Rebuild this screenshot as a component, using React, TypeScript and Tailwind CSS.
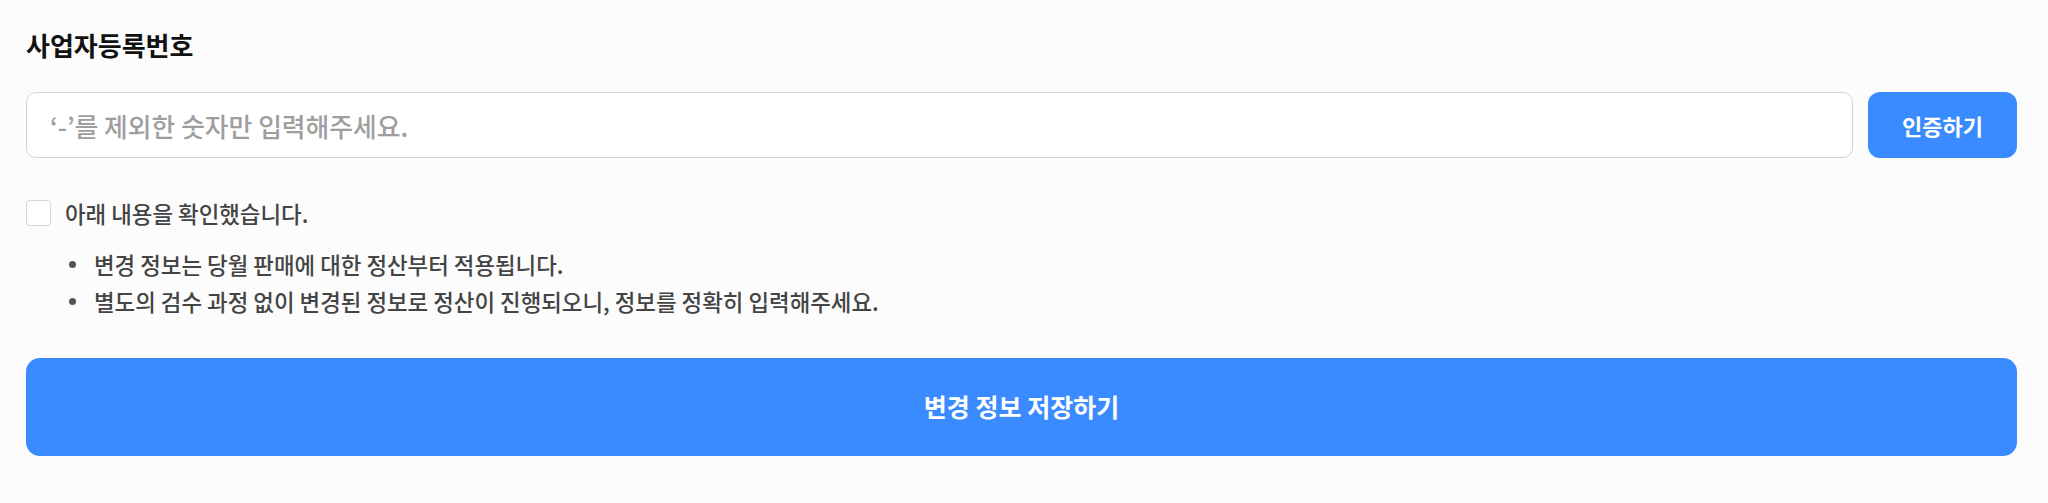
import React, { useState } from 'react'

const notices = [
    '변경 정보는 당월 판매에 대한 정산부터 적용됩니다.',
    '별도의 검수 과정 없이 변경된 정보로 정산이 진행되오니, 정보를 정확히 입력해주세요.',
]

const App = () => {
    const [bizNo, setBizNo] = useState<string>('')
    const [agreed, setAgreed] = useState<boolean>(false)

    return (
        <div
            className='min-h-screen bg-[#fcfcfc] pl-[26px] pr-[31px] pt-[26px]'
            style={{ fontFamily: '"Noto Sans CJK KR", "Noto Sans", sans-serif' }}
        >
            {/* title */}
            <h2 className='text-[26px] font-bold leading-[38px] text-[#111111]'>
                사업자등록번호
            </h2>

            {/* input + verify */}
            <div className='mt-[28px] flex gap-[15px]'>
                <input
                    className='h-[66px] flex-1 rounded-[10px] border border-[#d2d2d2] bg-white px-[23px] text-[25.8px] font-medium text-[#222] outline-0 placeholder:text-[#9e9e9e]'
                    placeholder="‘-’를 제외한 숫자만 입력해주세요."
                    value={bizNo}
                    onChange={({ target }) => setBizNo(target.value)}
                />
                <button
                    type='button'
                    className='h-[66px] w-[149px] rounded-[12px] bg-[#3a8bff] text-[22px] font-semibold text-white'
                >
                    인증하기
                </button>
            </div>

            {/* agree */}
            <label className='mt-[42px] flex items-center gap-[14px] cursor-pointer'>
                <span
                    onClick={() => setAgreed(!agreed)}
                    className={`h-[26px] w-[25px] rounded-[4px] border border-[#d6d6d6] ${agreed ? 'bg-[#3a8bff]' : 'bg-white'}`}
                />
                <span className='text-[22.4px] font-medium leading-[26px] text-[#444444]'>아래 내용을 확인했습니다.</span>
            </label>

            {/* notices */}
            <ul className='mt-[20px] pl-[43px]'>
                {notices.map((notice, index) => (
                    <li key={index} className='flex items-center gap-[18px] text-[22.4px] font-medium leading-[37px] text-[#444444]'>
                        <span className='h-[7px] w-[7px] rounded-full bg-[#555555]' />
                        {notice}
                    </li>
                ))}
            </ul>

            {/* save */}
            <button
                type='button'
                className='mt-[38px] h-[98px] w-full rounded-[14px] bg-[#3a8bff] text-[25px] font-semibold text-white'
            >
                변경 정보 저장하기
            </button>
        </div>
    )
}

export default App
